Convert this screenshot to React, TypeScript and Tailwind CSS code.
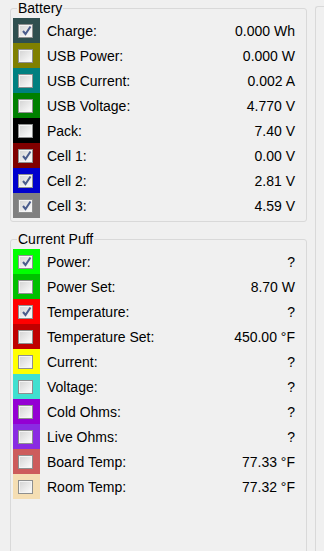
import React from "react";

type Row = { label: string; value: string; color: string; checked?: boolean };

const battery: Row[] = [
  { label: "Charge:", value: "0.000 Wh", color: "#2f4f4f", checked: true },
  { label: "USB Power:", value: "0.000 W", color: "#808000" },
  { label: "USB Current:", value: "0.002 A", color: "#008080" },
  { label: "USB Voltage:", value: "4.770 V", color: "#008000" },
  { label: "Pack:", value: "7.40 V", color: "#000000" },
  { label: "Cell 1:", value: "0.00 V", color: "#800000", checked: true },
  { label: "Cell 2:", value: "2.81 V", color: "#0000cd", checked: true },
  { label: "Cell 3:", value: "4.59 V", color: "#808080", checked: true },
];

const puff: Row[] = [
  { label: "Power:", value: "?", color: "#00ff00", checked: true },
  { label: "Power Set:", value: "8.70 W", color: "#00c000" },
  { label: "Temperature:", value: "?", color: "#ff0000", checked: true },
  { label: "Temperature Set:", value: "450.00 °F", color: "#c00000" },
  { label: "Current:", value: "?", color: "#ffff00" },
  { label: "Voltage:", value: "?", color: "#40e0d0" },
  { label: "Cold Ohms:", value: "?", color: "#9400d3" },
  { label: "Live Ohms:", value: "?", color: "#8a2be2" },
  { label: "Board Temp:", value: "77.33 °F", color: "#cd5c5c" },
  { label: "Room Temp:", value: "77.32 °F", color: "#f5deb3" },
];

const CheckBox = ({ checked }: { checked?: boolean }) => (
  <div className="relative w-[15px] h-[14px] border border-[#8e8f8f] bg-[#f4f4f4]">
    <div className="absolute inset-[1px] bg-gradient-to-br from-[#d6d6d6] to-[#fafafa]" />
    {checked && (
      <svg viewBox="0 0 13 12" className="absolute left-[1px] top-0 w-[13px] h-[12px]">
        <path d="M3 6 L5.5 9 L10.5 1.5" fill="none" stroke="#4a5c8c" strokeWidth="2" />
      </svg>
    )}
  </div>
);

const Group = ({ title, rows, className }: { title: string; rows: Row[]; className?: string }) => (
  <fieldset className={`border border-[#d9d9d9] rounded-[3px] w-[297px] ${className ?? ""}`}>
    <legend className="ml-[6px] px-[1px] leading-4">{title}</legend>
    <div className="flex flex-col mt-[2px] ml-[2px] pr-[11px]">
      {rows.map((r) => (
        <div key={r.label} className="flex items-center h-[25px]">
          <div className="w-[27px] h-[25px] flex items-center pl-[5px]" style={{ backgroundColor: r.color }}>
            <CheckBox checked={r.checked} />
          </div>
          <span className="ml-[7px] flex-1 leading-4">{r.label}</span>
          <span className="leading-4">{r.value}</span>
        </div>
      ))}
    </div>
  </fieldset>
);

export default function App() {
  return (
    <div className="relative w-[324px] h-[551px] overflow-hidden bg-[#f0f0f0] text-black text-[14px] font-['Liberation_Sans',Arial,sans-serif]">
      <div className="flex flex-col pl-[10px]">
        <Group title="Battery" rows={battery} className="pb-[3px]" />
        <Group title="Current Puff" rows={puff} className="mt-[9px] h-[340px]" />
      </div>
      <div className="absolute left-[315px] top-[6px] w-[20px] h-[560px] border-l border-t border-[#d9d9d9] rounded-tl-[3px]" />
    </div>
  );
}
